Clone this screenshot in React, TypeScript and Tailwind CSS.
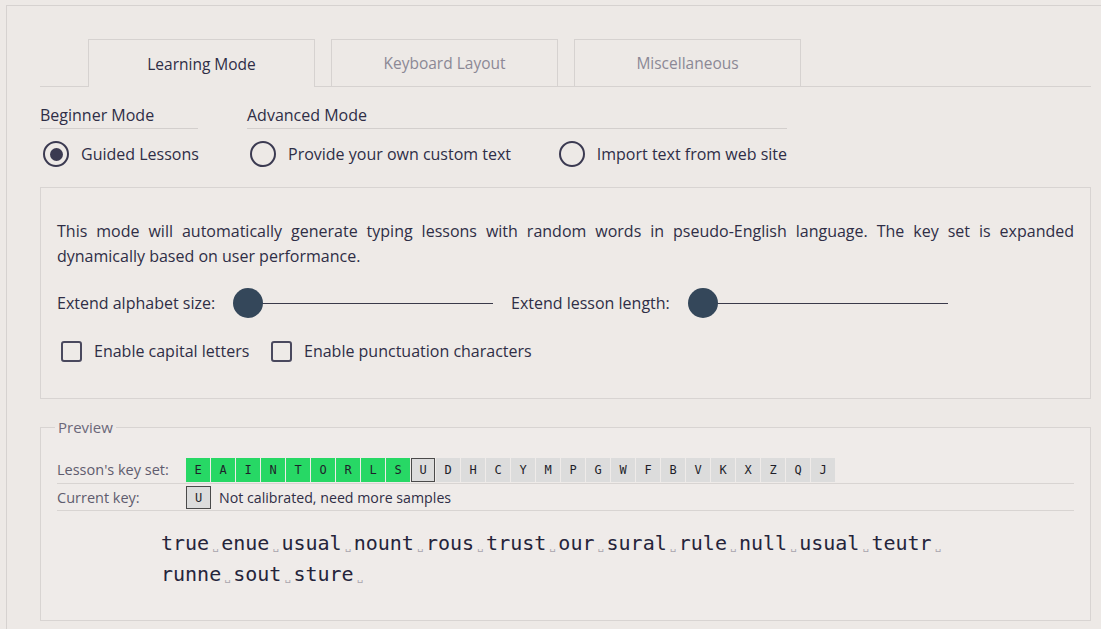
import React from 'react';

const greenKeys = ['E', 'A', 'I', 'N', 'T', 'O', 'R', 'L', 'S'];
const greyKeys = ['D', 'H', 'C', 'Y', 'M', 'P', 'G', 'W', 'F', 'B', 'V', 'K', 'X', 'Z', 'Q', 'J'];
const words = ['true', 'enue', 'usual', 'nount', 'rous', 'trust', 'our', 'sural', 'rule', 'null', 'usual', 'teutr', 'runne', 'sout', 'sture'];

const sans = "font-['Open_Sans','Lato',sans-serif]";
const mono = "font-['DejaVu_Sans_Mono','Liberation_Mono',monospace]";

function Radio({ label, checked }: { label: string; checked?: boolean }) {
  return (
    <div className="flex items-center gap-3 pl-[3px]">
      <span className="flex h-[26px] w-[26px] shrink-0 items-center justify-center rounded-full border-[2.5px] border-[#3b3a51]">
        {checked && <span className="h-[13px] w-[13px] rounded-full bg-[#3b3a51]" />}
      </span>
      <span className="whitespace-nowrap">{label}</span>
    </div>
  );
}

function Slider() {
  return (
    <div className="relative h-[30px] w-[260px]">
      <div className="absolute left-[15px] right-0 top-[15px] h-px bg-[#3a3a4a]" />
      <div className="absolute left-0 top-0 h-[30px] w-[30px] rounded-full bg-[#34475a]" />
    </div>
  );
}

function Checkbox({ label }: { label: string }) {
  return (
    <div className="flex items-center gap-3">
      <span className="h-[21px] w-[21px] shrink-0 rounded-[3px] border-2 border-[#4a495e]" />
      <span className="whitespace-nowrap">{label}</span>
    </div>
  );
}

export default function App() {
  return (
    <div className={`h-[629px] w-full overflow-hidden bg-[#ede9e6] pl-[6px] pt-[5px] text-[#2f2e46] ${sans}`}>
      <div className="h-full border-l border-t border-[#d6d2d0] pl-[33px] pt-[33px]">
        <div className="w-[1051px]">
          {/* Tabs */}
          <div className="flex h-[48px] gap-4 border-b border-[#d6d2d0] pl-[48px]">
            <div className="-mb-px flex h-[48px] w-[227px] items-center justify-center border border-b-0 border-[#d6d2d0] bg-[#ede9e6] pt-[2px] text-[15.5px]">
              Learning Mode
            </div>
            <div className="flex h-[47px] w-[227px] items-center justify-center border border-b-0 border-[#d6d2d0] pt-[2px] text-[15.5px] text-[#8b8895]">
              Keyboard Layout
            </div>
            <div className="flex h-[47px] w-[227px] items-center justify-center border border-b-0 border-[#d6d2d0] pt-[2px] text-[15.5px] text-[#8b8895]">
              Miscellaneous
            </div>
          </div>

          {/* Mode selection */}
          <div className="mt-[18px] flex gap-[49px] text-[16px]">
            <div className="w-[158px]">
              <div className="border-b border-[#d3cfcd] pb-[3px] leading-[20px]">Beginner Mode</div>
              <div className="mt-[12px]">
                <Radio label="Guided Lessons" checked />
              </div>
            </div>
            <div className="w-[540px]">
              <div className="border-b border-[#d3cfcd] pb-[3px] leading-[20px]">Advanced Mode</div>
              <div className="mt-[12px] flex">
                <div className="w-[311px]">
                  <Radio label="Provide your own custom text" />
                </div>
                <Radio label="Import text from web site" />
              </div>
            </div>
          </div>

          {/* Settings box */}
          <div className="mt-[20px] h-[212px] border border-[#d8d4d2] bg-[#eeeae7] px-[16px] pt-[31px]">
            <p className="text-justify text-[16px] leading-[25px]">
              This mode will automatically generate typing lessons with random words in pseudo-English language. The key set is expanded dynamically based on user performance.
            </p>
            <div className="mt-[19px] flex items-center text-[16px]">
              <span className="w-[176px] whitespace-nowrap">Extend alphabet size:</span>
              <Slider />
              <span className="ml-[18px] w-[177px] whitespace-nowrap">Extend lesson length:</span>
              <div className="w-[258px]">
                <Slider />
              </div>
            </div>
            <div className="ml-[4px] mt-[21px] flex text-[16px]">
              <div className="w-[210px]">
                <Checkbox label="Enable capital letters" />
              </div>
              <Checkbox label="Enable punctuation characters" />
            </div>
          </div>

          {/* Preview */}
          <fieldset className="mt-[18px] h-[204px] border border-[#d8d4d2] bg-[#efebe9] px-[16px]">
            <legend className="ml-[-2px] px-[3px] text-[15px] leading-[20px] text-[#6b6879]">Preview</legend>
            <div className="mt-[21px] flex items-center border-b border-[#d8d4d2] pb-px">
              <span className="w-[129px] text-[14.5px] text-[#5f5c6e]">Lesson's key set:</span>
              <div className={`flex gap-px text-[12px] text-[#1f1f2a] ${mono}`}>
                {greenKeys.map((k) => (
                  <span key={k} className="flex h-[24px] w-[24px] items-center justify-center bg-[#27d865]">
                    {k}
                  </span>
                ))}
                <span className="flex h-[24px] w-[24px] items-center justify-center border border-[#4a4a4a] bg-[#dcdcdc]">U</span>
                {greyKeys.map((k) => (
                  <span key={k} className="flex h-[24px] w-[24px] items-center justify-center bg-[#dcdcdc]">
                    {k}
                  </span>
                ))}
              </div>
            </div>
            <div className="flex items-center border-b border-[#d8d4d2] pb-px pt-[2px]">
              <span className="w-[129px] text-[14.5px] text-[#5f5c6e]">Current key:</span>
              <span className={`flex h-[23px] w-[25px] items-center justify-center border border-[#4a4a4a] bg-[#dcdcdc] text-[12px] text-[#1f1f2a] ${mono}`}>
                U
              </span>
              <span className="ml-[8px] text-[14.2px]">Not calibrated, need more samples</span>
            </div>
            <div className={`ml-[104px] mt-[17px] flex w-[808px] flex-wrap text-[20px] leading-[31px] text-[#25243a] ${mono}`}>
              {words.map((w, i) => (
                <span key={i} className="inline-block h-[31px] whitespace-nowrap">
                  {w}
                  <span className="inline-block w-[1ch] text-center">
                    <span className="text-[10px] leading-none text-[#a9a5ad]">␣</span>
                  </span>
                </span>
              ))}
            </div>
          </fieldset>
        </div>
      </div>
    </div>
  );
}
